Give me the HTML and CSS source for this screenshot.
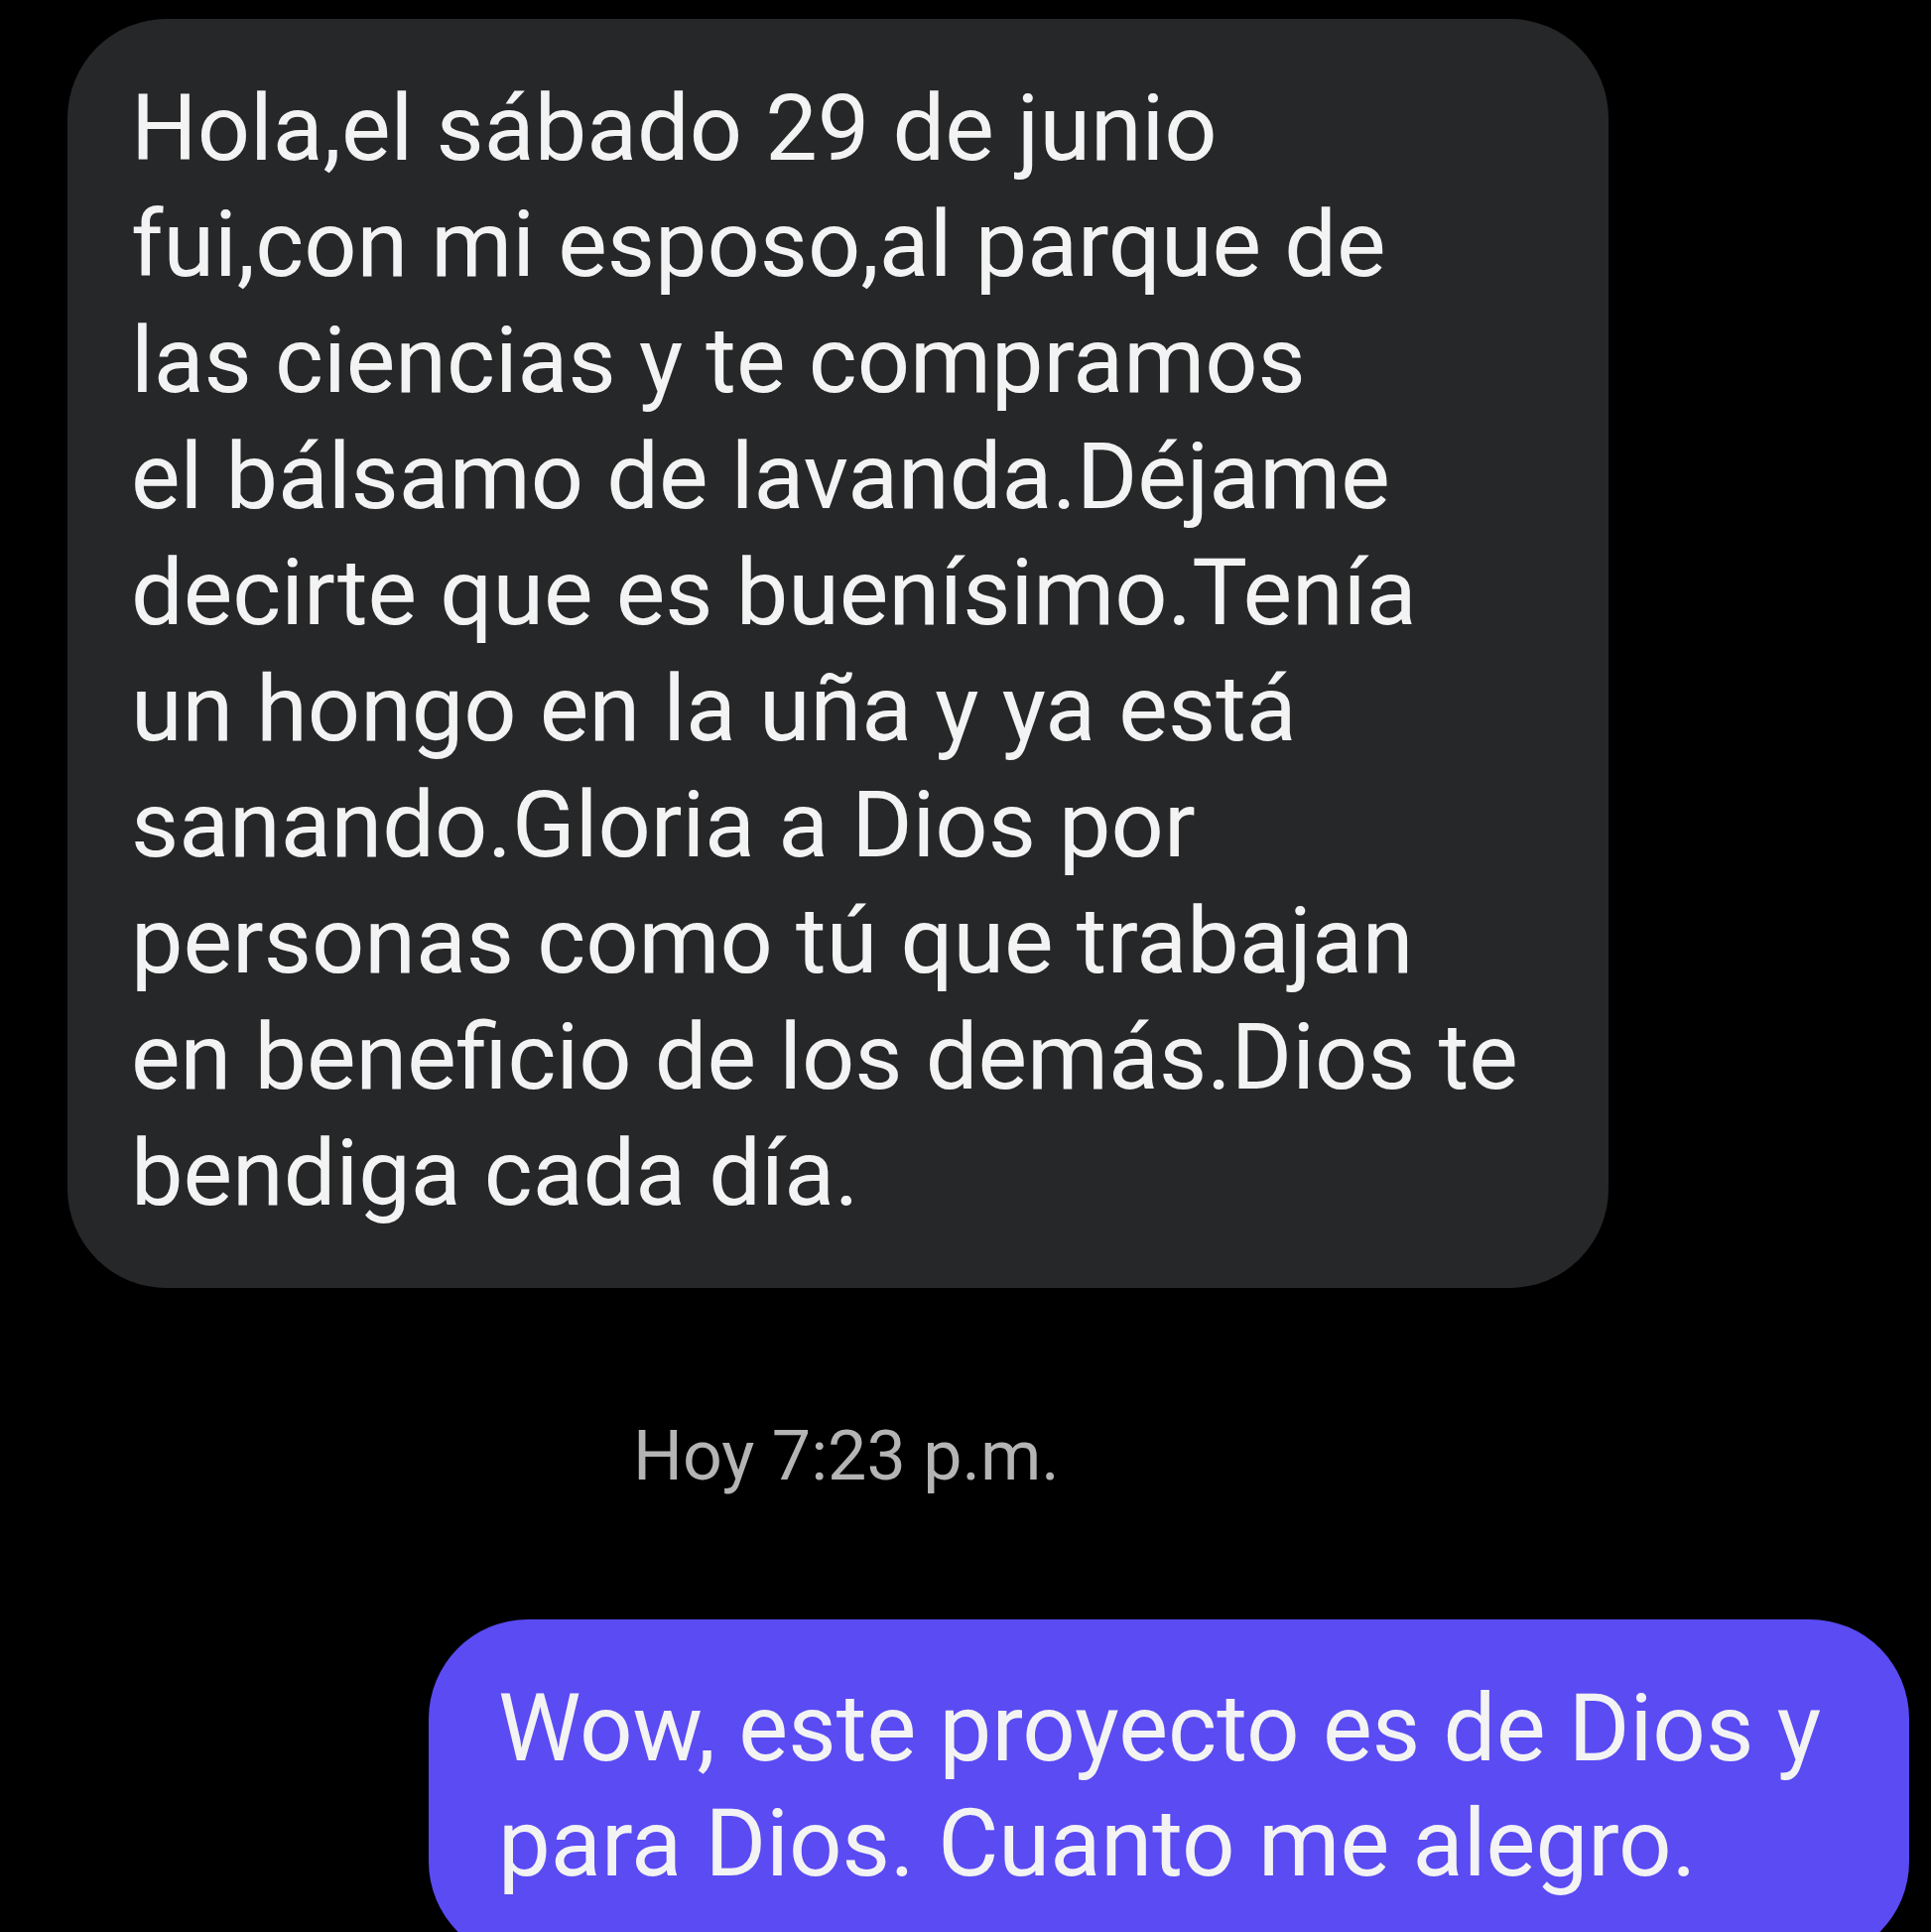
FILE: index.html
```html
<!DOCTYPE html>
<html lang="es">
<head>
<meta charset="utf-8">
<title>Mensajes</title>
<link rel="stylesheet" href="styles.css">
</head>
<body>
<main class="thread">
  <div class="bubble bubble-in">
    <p class="msg">Hola,el sábado 29 de junio<br>fui,con mi esposo,al parque de<br>las ciencias y te compramos<br>el bálsamo de lavanda.Déjame<br>decirte que es buenísimo.Tenía<br>un hongo en la uña y ya está<br>sanando.Gloria a Dios por<br>personas como tú que trabajan<br>en beneficio de los demás.Dios te<br>bendiga cada día.</p>
  </div>
  <div class="time">Hoy 7:23 p.m.</div>
  <div class="bubble bubble-out">
    <p class="msg">Wow, este proyecto es de Dios y<br>para Dios. Cuanto me alegro.</p>
  </div>
</main>
</body>
</html>
```

FILE: styles.css
```css
html, body {
  margin: 0;
  padding: 0;
  background: #000;
}
body {
  width: 1946px;
  height: 1947px;
  overflow: hidden;
  font-family: Roboto, "Noto Sans", sans-serif;
  color: #f3f3f3;
}
.thread {
  display: flex;
  flex-direction: column;
  padding-top: 19px;
}
.bubble {
  box-sizing: border-box;
  border-radius: 100px;
}
.msg {
  margin: 0;
  font-size: 93.5px;
  line-height: 117px;
  white-space: nowrap;
}
.bubble-in {
  margin-left: 68px;
  width: 1553px;
  background: #262728;
  padding: 52px 40px 57px 64px;
}
.time {
  margin-top: 128px;
  padding-left: 638px;
  font-size: 70px;
  line-height: 82px;
  color: #b4b4b4;
}
.bubble-out {
  align-self: flex-end;
  margin-top: 124px;
  margin-right: 22px;
  width: 1492px;
  background: #5a4bf3;
  padding: 52px 40px 60px 70px;
}
.bubble-out .msg {
  font-size: 94px;
  line-height: 116px;
}
```
